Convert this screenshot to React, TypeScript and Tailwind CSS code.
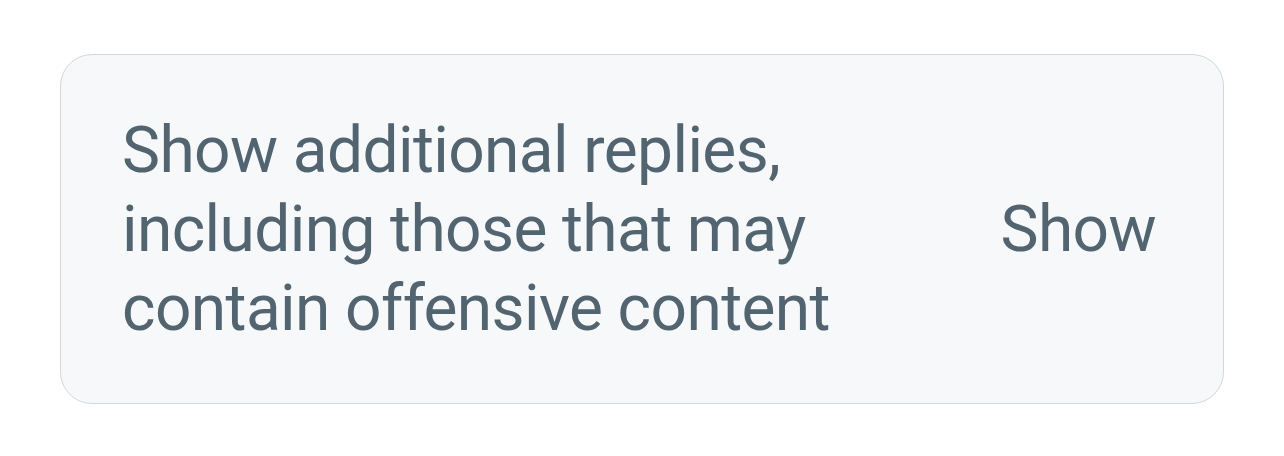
import React from 'react';

const App: React.FC = () => {
  return (
    <div className="w-[1284px] h-[456px] bg-white pt-[54px] pl-[60px]" style={{ fontFamily: 'Roboto, "Noto Sans", sans-serif' }}>
      <div className="w-[1164px] h-[350px] rounded-[32px] border border-[#cfd9de] bg-[#f7f8fa] flex items-center justify-between pl-[61px] pr-[67px]">
        <p className="text-[64px] leading-[79px] tracking-[-0.6px] text-[#536471]">
          Show additional replies,
          <br />
          including those that may
          <br />
          contain offensive content
        </p>
        <button type="button" className="text-[64px] leading-[79px] tracking-[-0.6px] text-[#536471]">
          Show
        </button>
      </div>
    </div>
  );
};

export default App;
